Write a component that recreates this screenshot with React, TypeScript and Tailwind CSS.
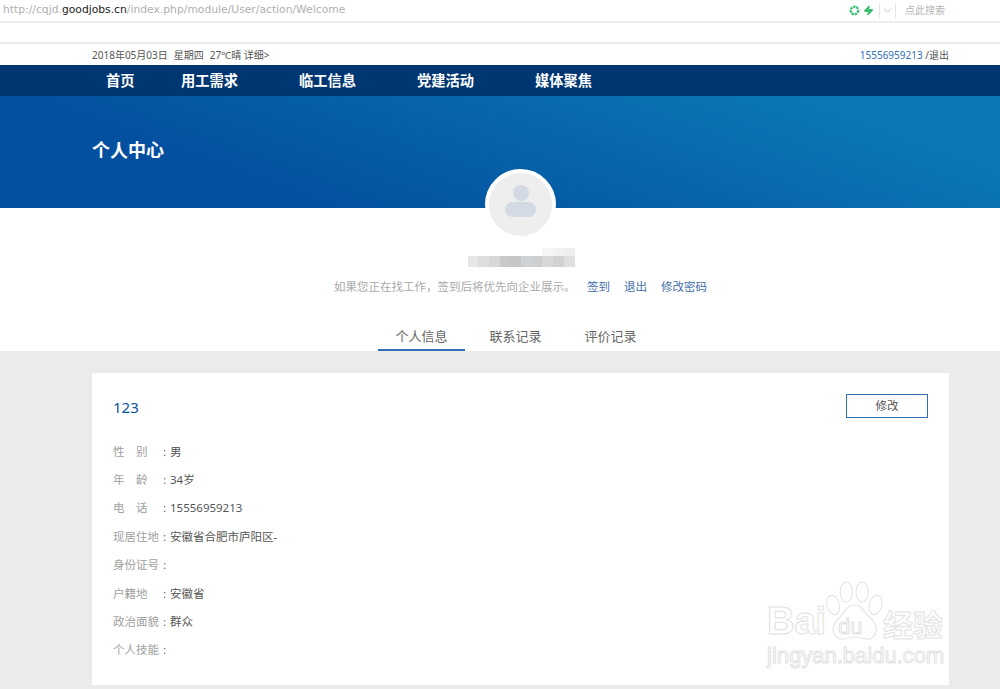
import React from 'react';
import { ChevronDown, Zap } from 'lucide-react';

const cjk = "[font-family:'Noto_Sans','Noto_Sans_CJK_SC',sans-serif]";

const navItems = [
  { label: '首页', width: 'w-[75px]' },
  { label: '用工需求', width: 'w-[118px]' },
  { label: '临工信息', width: 'w-[118px]' },
  { label: '党建活动', width: 'w-[118px]' },
  { label: '媒体聚焦', width: 'w-[118px]' },
];

const infoRows = [
  { label: '性\u3000别', value: '男' },
  { label: '年\u3000龄', value: '34岁' },
  { label: '电\u3000话', value: '15556959213' },
  { label: '现居住地', value: '安徽省合肥市庐阳区-' },
  { label: '身份证号', value: '' },
  { label: '户籍地', value: '安徽省' },
  { label: '政治面貌', value: '群众' },
  { label: '个人技能', value: '' },
];

const mosaicTop = ['#ffffff', '#ffffff', '#ffffff', '#ffffff', '#ffffff', '#ffffff', '#ffffff', '#f6f6f6', '#f2f2f2', '#eeeef0'];
const mosaic = ['#e6e6e6', '#dedede', '#d8d8d8', '#c9c9c9', '#c6c6c6', '#cfd2d5', '#cecece', '#d8d8d8', '#d2d2d2', '#dfdfe1'];

const Watermark = () => (
  <div className="absolute right-[55px] bottom-[20px] w-[180px] h-[88px] pointer-events-none">
    <svg className="absolute left-[54px] top-0" width="74" height="60" viewBox="0 0 84 60" preserveAspectRatio="none" fill="none" stroke="#e4e4e4" strokeWidth="1.2">
      <ellipse cx="16" cy="24" rx="7" ry="10" transform="rotate(-20 16 24)" />
      <ellipse cx="31" cy="11" rx="7" ry="10" />
      <ellipse cx="49" cy="11" rx="7" ry="10" />
      <ellipse cx="64" cy="24" rx="7" ry="10" transform="rotate(20 64 24)" />
      <path d="M40 24c-8 0-10 6-15 11-5 4-9 8-9 13 0 7 6 11 13 10 5-1 8-2 12-2s7 1 12 2c7 1 12-3 12-10 0-5-4-9-9-13-6-5-8-11-16-11z" />
    </svg>
    <div className="absolute left-[2px] top-[20px] text-[38px] leading-[40px] font-['Liberation_Sans',sans-serif] font-bold text-white [-webkit-text-stroke:1px_#e2e2e2]">Bai</div>
    <div className="absolute left-[73px] top-[35px] text-[22px] leading-[22px] font-['Liberation_Sans',sans-serif] text-white [-webkit-text-stroke:1px_#e2e2e2]">du</div>
    <div className={`absolute left-[118px] top-[27px] text-[30px] leading-[34px] font-bold whitespace-nowrap text-white [-webkit-text-stroke:1px_#e2e2e2] ${cjk}`}>经验</div>
    <div className="absolute left-[2px] top-[63px] text-[22px] leading-[24px] whitespace-nowrap font-['Liberation_Sans',sans-serif] text-white [-webkit-text-stroke:1px_#e2e2e2]">jingyan.baidu.com</div>
  </div>
);

export default function App() {
  return (
    <div className={`relative w-[1000px] h-[689px] overflow-hidden bg-[#ebebeb] flex flex-col ${cjk}`}>
      {/* browser address bar */}
      <div className="h-[23px] shrink-0 bg-white border-b-2 border-[#ececec] flex items-center pl-[3px] pr-[55px]">
        <div className="text-[10.75px] text-[#b0b0b0] font-['DejaVu_Sans',sans-serif] whitespace-nowrap">
          http://cqjd.<span className="text-[#222]">goodjobs.cn</span>/index.php/module/User/action/Welcome
        </div>
        <div className="ml-auto flex items-center">
          <svg width="11" height="11" viewBox="0 0 11 11" fill="none" className="mr-[3px]">
            <circle cx="5.5" cy="5.5" r="3.8" stroke="#2fc06a" strokeWidth="2.2" strokeDasharray="2.4 0.8" />
          </svg>
          <Zap size={11} className="text-[#2fc06a] fill-[#2fc06a] mr-[5px]" />
          <div className="h-[15px] w-px bg-[#e4e4e4]" />
          <ChevronDown size={13} strokeWidth={1} className="text-[#999] mx-[1px]" />
          <div className="h-[15px] w-px bg-[#e4e4e4] mr-[9px]" />
          <span className="text-[10px] text-[#b4b4b4] w-[40px] whitespace-nowrap">点此搜索</span>
        </div>
      </div>

      {/* browser toolbar gap */}
      <div className="h-[21px] shrink-0 bg-white border-b-2 border-[#ececec]" />

      {/* top info */}
      <div className="h-[21px] shrink-0 bg-white flex items-center justify-between pl-[92px] pr-[51px] pt-[2px] text-[10px] text-[#555]">
        <div className="flex gap-[6px]">
          <span>2018年05月03日</span>
          <span>星期四</span>
          <span>27℃晴 详细&gt;</span>
        </div>
        <div>
          <span className="text-[#2f6fb5]">15556959213</span> /退出
        </div>
      </div>

      {/* nav */}
      <div className="h-[31px] shrink-0 bg-[#003672] flex items-center pl-[106px]">
        {navItems.map((item) => (
          <div key={item.label} className={`${item.width} text-[14.25px] font-bold text-white whitespace-nowrap`}>
            {item.label}
          </div>
        ))}
      </div>

      {/* banner */}
      <div className="h-[112px] shrink-0 bg-[linear-gradient(20deg,#0450a0_25%,#0a78b4_85%)] pl-[92px] pt-[41px]">
        <div className="text-[18px] leading-[26px] font-bold text-white">个人中心</div>
      </div>

      {/* profile */}
      <div className="h-[143px] shrink-0 bg-white flex flex-col items-center pl-[41px]">
        <div className="w-[71px] h-[71px] -mt-[39px] rounded-full bg-[#eeeeee] border-[4px] border-white flex flex-col items-center pt-[12px] gap-[1px]">
          <div className="w-[16px] h-[16px] rounded-full bg-[#d3dae4]" />
          <div className="w-[31px] h-[15px] rounded-full bg-[#d3dae4]" />
        </div>
        <div className="flex flex-col mt-[8px] h-[19px] w-[107px] ml-[1px]">
          <div className="flex h-[8px]">
            {mosaicTop.map((color, i) => (
              <div key={i} className="flex-1" style={{ backgroundColor: color }} />
            ))}
          </div>
          <div className="flex h-[11px]">
            {mosaic.map((color, i) => (
              <div key={i} className="flex-1" style={{ backgroundColor: color }} />
            ))}
          </div>
        </div>
        <div className="flex items-center mt-[11px] h-[17px] text-[11.5px] whitespace-nowrap">
          <span className="text-[#aaaaaa] w-[253px]">如果您正在找工作，签到后将优先向企业展示。</span>
          <span className="text-[#3f6ea8] w-[37px]">签到</span>
          <span className="text-[#3f6ea8] w-[37px]">退出</span>
          <span className="text-[#3f6ea8]">修改密码</span>
        </div>
        <div className="flex mt-[25px] ml-[-8px] h-[31px] text-[13px] text-[#666]">
          <div className="w-[87px] text-center border-b-2 border-[#2f6fb5] leading-[33px]">个人信息</div>
          <div className="w-[101px] text-center leading-[33px]">联系记录</div>
          <div className="w-[89px] text-center leading-[33px]">评价记录</div>
        </div>
      </div>

      {/* card */}
      <div className="mt-[22px] ml-[92px] mr-[51px] h-[312px] shrink-0 bg-white px-[21px] pt-[21px]">
        <div className="flex items-start justify-between">
          <div className="text-[15px] leading-[26px] text-[#0a56a0]">123</div>
          <button className="w-[82px] h-[24px] border border-[#2f6fb5] text-[11.5px] text-[#555]">修改</button>
        </div>
        <div className="mt-[17px] flex flex-col">
          {infoRows.map((row) => (
            <div key={row.label} className="h-[28.4px] flex items-center text-[11.5px] whitespace-nowrap">
              <span className="w-[50px] text-[#a0a0a0]">{row.label}</span>
              <span className="w-[7px] text-[#666]">:</span>
              <span className="text-[#555]">{row.value}</span>
            </div>
          ))}
        </div>
      </div>
      <Watermark />
    </div>
  );
}
